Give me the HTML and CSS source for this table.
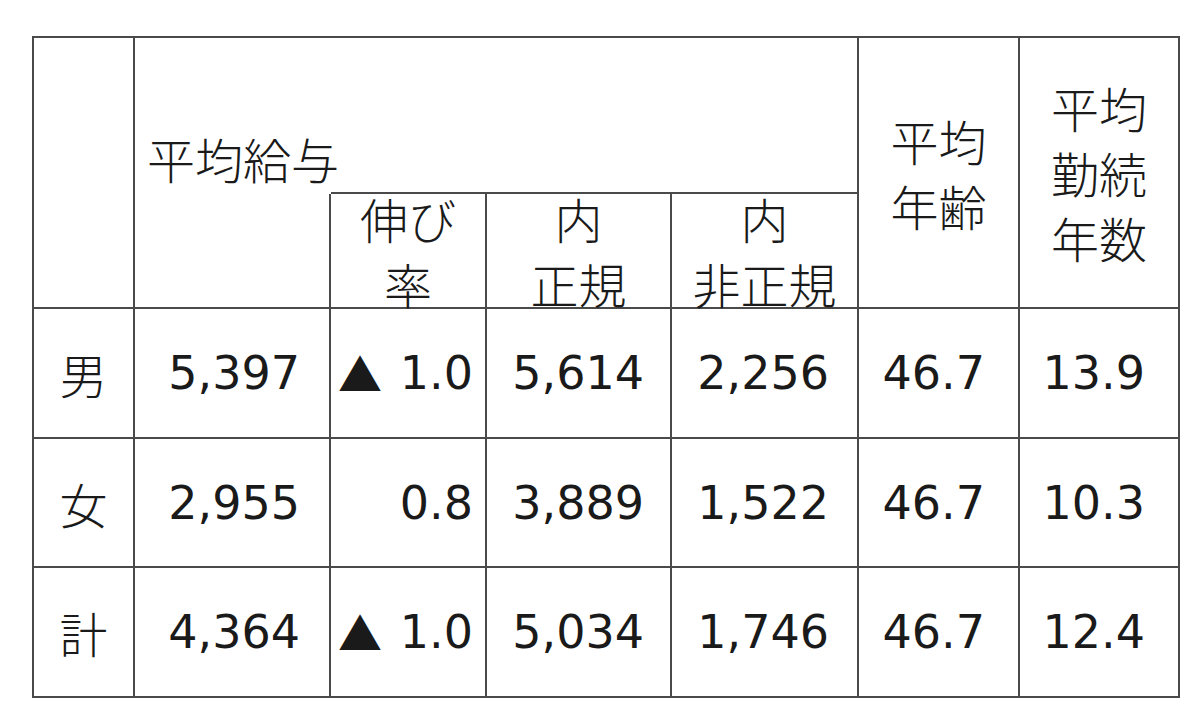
FILE: index.html
```html
<!DOCTYPE html>
<html lang="ja">
<head>
<meta charset="utf-8">
<title>平均給与</title>
<link rel="stylesheet" href="styles.css">
</head>
<body>
<div class="page">
  <div class="grid">
    <div class="cell corner"></div>
    <div class="cell jp kyuyo">平均給与</div>
    <div class="cell jp hv age">平均<br>年齢</div>
    <div class="cell jp hv tenure">平均<br>勤続<br>年数</div>
    <div class="cell under"></div>
    <div class="cell jp hv sub s1">伸び<br>率</div>
    <div class="cell jp hv sub s2">内<br>正規</div>
    <div class="cell jp hv sub s3">内<br>非正規</div>

    <div class="cell jp lbl">男</div>
    <div class="cell num c2">5,397</div>
    <div class="cell num c3"><span class="tri">▲</span><span>1.0</span></div>
    <div class="cell num c4">5,614</div>
    <div class="cell num c5">2,256</div>
    <div class="cell num c6">46.7</div>
    <div class="cell num c7">13.9</div>

    <div class="cell jp lbl">女</div>
    <div class="cell num c2">2,955</div>
    <div class="cell num c3"><span class="tri"></span><span>0.8</span></div>
    <div class="cell num c4">3,889</div>
    <div class="cell num c5">1,522</div>
    <div class="cell num c6">46.7</div>
    <div class="cell num c7">10.3</div>

    <div class="cell jp lbl">計</div>
    <div class="cell num c2">4,364</div>
    <div class="cell num c3"><span class="tri">▲</span><span>1.0</span></div>
    <div class="cell num c4">5,034</div>
    <div class="cell num c5">1,746</div>
    <div class="cell num c6">46.7</div>
    <div class="cell num c7">12.4</div>
  </div>
</div>
</body>
</html>
```

FILE: styles.css
```css
html, body {
  margin: 0;
  padding: 0;
  background: #ffffff;
}

.page {
  padding: 36px 0 0 32px;
  color: #1a1a1a;
}

.grid {
  display: grid;
  grid-template-columns: 101px 196px 156px 185px 187px 161px 160px;
  grid-template-rows: 156px 115px 130px 129px 130px;
  width: max-content;
  border-top: 2px solid #4a4a4a;
  border-left: 2px solid #4a4a4a;
}

.cell {
  box-sizing: border-box;
  border-right: 2px solid #4a4a4a;
  border-bottom: 2px solid #4a4a4a;
  display: flex;
  align-items: center;
  min-width: 0;
}

.jp {
  font-family: "Noto Sans CJK JP", sans-serif;
  font-size: 48px;
  font-weight: 300;
}

.corner { grid-column: 1; grid-row: 1 / 3; }

.kyuyo {
  grid-column: 2 / 6;
  grid-row: 1;
  align-items: flex-end;
  padding: 0 0 10px 12px;
  line-height: 1;
  border-bottom: 2px solid transparent;
  background-image: linear-gradient(#4a4a4a, #4a4a4a);
  background-size: calc(100% - 196px) 2px;
  background-position: right bottom;
  background-repeat: no-repeat;
  background-origin: border-box;
}

.hv {
  flex-direction: column;
  justify-content: center;
  text-align: center;
  line-height: 65px;
  white-space: nowrap;
}

.age { grid-column: 6; grid-row: 1 / 3; }
.tenure { grid-column: 7; grid-row: 1 / 3; }
.under { grid-column: 2; grid-row: 2; }
.s1 { grid-column: 3; grid-row: 2; }
.s2 { grid-column: 4; grid-row: 2; }
.s3 { grid-column: 5; grid-row: 2; }

.lbl {
  justify-content: center;
}

.num {
  font-family: "DejaVu Sans", "Noto Sans CJK JP", sans-serif;
  font-size: 46px;
  justify-content: flex-end;
  white-space: nowrap;
}

.c2 { padding-right: 29px; }
.c3 { padding: 0 12px 0 7px; justify-content: space-between; }
.c4 { padding-right: 26px; }
.c5 { padding-right: 28px; }
.c6 { padding-right: 33px; }
.c7 { padding-right: 33px; }

.tri {
  font-family: "Noto Sans CJK JP", sans-serif;
  font-size: 44px;
}
```
